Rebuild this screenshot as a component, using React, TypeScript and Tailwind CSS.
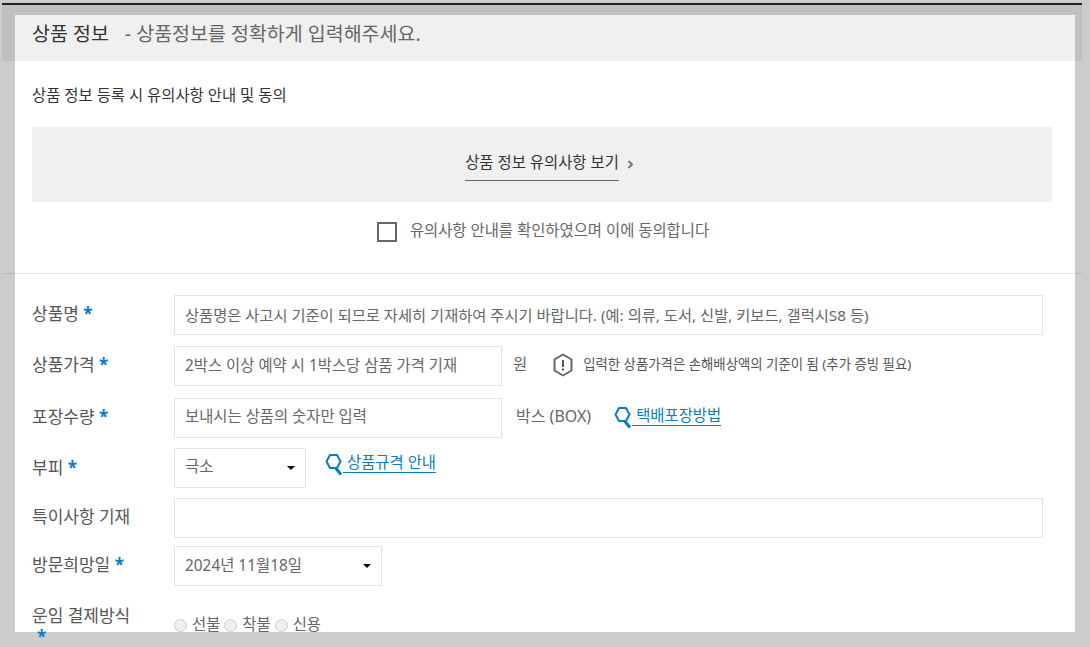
const font = "font-['Noto_Sans','Noto_Sans_CJK_KR',sans-serif]";

function Star() {
  return <span className="text-[#0a7cc4] font-bold">*</span>;
}

function Lens() {
  return (
    <svg width="18" height="23" viewBox="0 0 18 23" fill="none" className="shrink-0 -mb-[3px]">
      <path d="M5 2h7l3.5 6.5-3.5 6.5H5L1.5 8.5z" stroke="#0a7cc4" strokeWidth="2" strokeLinejoin="round" />
      <path d="M11 15.5l5 6" stroke="#0a7cc4" strokeWidth="3" />
    </svg>
  );
}

function Caret() {
  return <span className="w-0 h-0 border-x-[4px] border-x-transparent border-t-[4px] border-t-black" />;
}

function Label({ children, className = "" }: { children: React.ReactNode; className?: string }) {
  return <div className={`w-[142px] shrink-0 text-[17px] leading-[24px] text-[#555] ${className}`}>{children}</div>;
}

const box = "h-[40px] border border-[#e4e4e4] bg-white px-[10px] flex items-center text-[15.4px] text-[#666]";

export default function App() {
  return (
    <div className={`${font} relative w-[1090px] h-[647px] overflow-hidden bg-[#cccccc] pt-[15px] pl-[15px]`}>
      <div className="absolute left-[2px] top-[3px] w-[1080px] h-[2px] bg-[#222]" />
      <div className="absolute left-[2px] top-[5px] w-[1080px] h-[56px] bg-[#c0c0c0]" />
      <div className="relative w-[1060px] h-[617px] bg-white">
        <div className="h-[46px] bg-[#f0f0f0] pl-[17px] flex items-center text-[19.5px] pb-[8px]">
          <span className="text-[#333]">상품 정보</span>
          <span className="text-[#666] ml-[16px]">- 상품정보를 정확하게 입력해주세요.</span>
        </div>
        <div className="pl-[17px] mt-[23px] text-[15.4px] leading-[24px] text-[#333]">상품 정보 등록 시 유의사항 안내 및 동의</div>
        <div className="ml-[17px] mr-[23px] mt-[19px] h-[75px] bg-[#f0f0f0] flex items-center justify-center">
          <span className="ml-[15px] text-[15.4px] leading-[34px] text-[#333] border-b border-[#666] -mt-[3px]">상품 정보 유의사항 보기</span>
          <svg width="7" height="9" viewBox="0 0 7 9" className="ml-[8px]" fill="none">
            <path d="M1.5 1L5 4.5 1.5 8" stroke="#777" strokeWidth="2" />
          </svg>
        </div>
        <div className="flex items-center justify-center mt-[18px] h-[24px] pr-[4px]">
          <span className="w-[20px] h-[20px] border-2 border-[#666] bg-white" />
          <span className="ml-[13px] text-[15.4px] text-[#666] -mt-[3px]">유의사항 안내를 확인하였으며 이에 동의합니다</span>
        </div>
        <div className="mt-[29px] h-px bg-black/10 -ml-[13px] -mr-[7px]" />

        <div className="pl-[17px] pt-[21px]">
          <div className="flex items-center">
            <Label className="-mt-[2px]">상품명 <Star /></Label>
            <div className={`${box} w-[869px]`}><span className="text-[15.3px]">상품명은 사고시 기준이 되므로 자세히 기재하여 주시기 바랍니다. (예: 의류, 도서, 신발, 키보드, 갤럭시S8 등)</span></div>
          </div>
          <div className="flex items-center mt-[11px]">
            <Label className="-mt-[3px]">상품가격 <Star /></Label>
            <div className={`${box} w-[328px]`}>2박스 이상 예약 시 1박스당 삼품 가격 기재</div>
            <span className="ml-[11px] text-[15.4px] text-[#666] -mt-[3px]">원</span>
            <svg width="20" height="24" viewBox="0 0 20 24" className="ml-[26px] -mt-[2px]" fill="none">
              <path d="M10 1.5l8.5 5v11l-8.5 5-8.5-5v-11z" stroke="#666" strokeWidth="2" strokeLinejoin="round" />
              <path d="M10 7v7M10 15.5v2" stroke="#555" strokeWidth="2" />
            </svg>
            <span className="ml-[10px] text-[13.4px] text-[#555] -mt-[3px]">입력한 상품가격은 손해배상액의 기준이 됨 (추가 증빙 필요)</span>
          </div>
          <div className="flex items-center mt-[12px]">
            <Label className="-mt-[3px]">포장수량 <Star /></Label>
            <div className={`${box} w-[328px]`}><span className="-mt-[2px]">보내시는 상품의 숫자만 입력</span></div>
            <span className="ml-[14px] text-[16px] text-[#666] -mt-[5px]">박스 (BOX)</span>
            <span className="ml-[23px] flex items-end text-[15.4px] leading-[18px] text-[#0a7cc4] -mt-[7px]">
              <Lens />
              <span className="border-b border-[#0a7cc4] pt-[4px] pl-[4px]">택배포장방법</span>
            </span>
          </div>
          <div className="flex items-start mt-[10px]">
            <Label className="mt-[8px]">부피 <Star /></Label>
            <div className={`${box} w-[132px] justify-between pr-[10px]`}>
              <span className="-mt-[2px]">극소</span>
              <Caret />
            </div>
            <span className="ml-[19px] mt-[2px] flex items-end text-[15.4px] leading-[18px] text-[#0a7cc4]">
              <Lens />
              <span className="border-b border-[#0a7cc4] pt-[4px] pl-[4px]">상품규격 안내</span>
            </span>
          </div>
          <div className="flex items-center mt-[10px]">
            <Label className="-mt-[3px]">특이사항 기재</Label>
            <div className={`${box} w-[869px]`} />
          </div>
          <div className="flex items-center mt-[8px]">
            <Label className="-mt-[2px]">방문희망일 <Star /></Label>
            <div className={`${box} w-[208px] justify-between`}>
              2024년 11월18일
              <Caret />
            </div>
          </div>
          <div className="flex items-start mt-[17px]">
            <Label>
              <div className="leading-[26px]">운임 결제방식</div>
              <div className="leading-[26px] pl-[5px] -mt-[5px]"><Star /></div>
            </Label>
            <div className="flex items-center text-[15.4px] text-[#666] mt-[10px] leading-[24px]">
              {["선불", "착불", "신용"].map((t) => (
                <span key={t} className="flex items-center mr-[4px]">
                  <span className="w-[13px] h-[13px] rounded-full border border-[#ccc] bg-[#f0f0f0] mr-[5px]" />
                  {t}
                </span>
              ))}
            </div>
          </div>
        </div>
      </div>
    </div>
  );
}
